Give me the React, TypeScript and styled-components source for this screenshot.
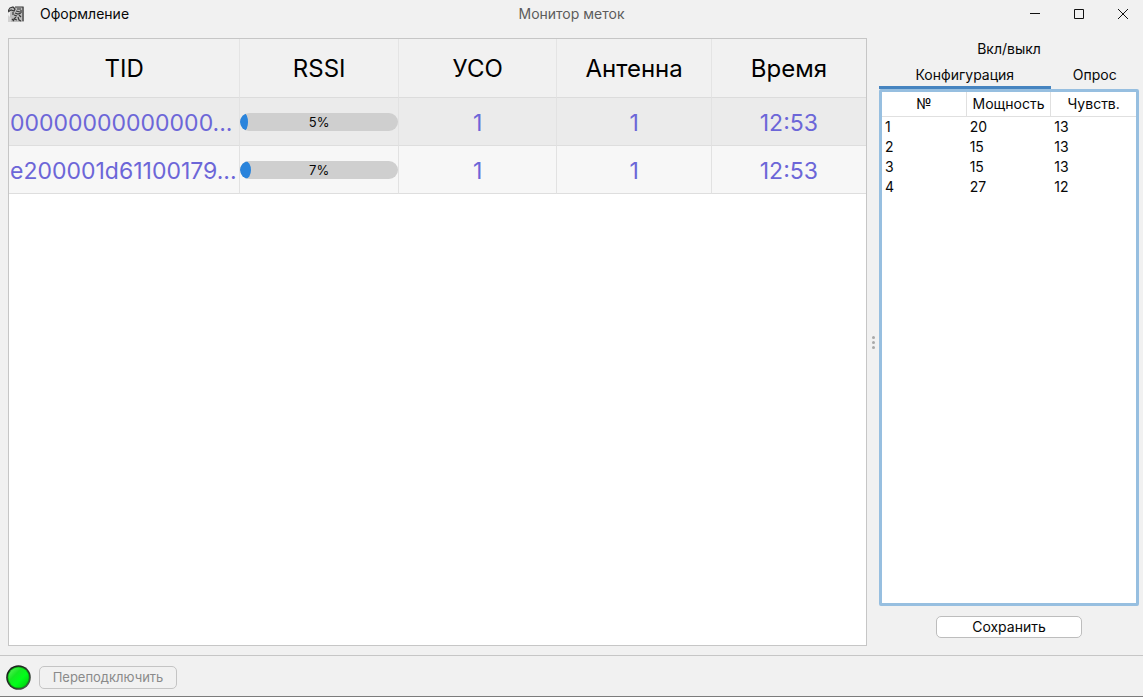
import React, { useState } from "react";
import styled, { createGlobalStyle } from "styled-components";

const Global = createGlobalStyle`
  *, *::before, *::after { box-sizing: border-box; }
  body {
    margin: 0;
    background: #f1f1f1;
    color: #080808;
    font: 14px/20px Inter, Roboto, sans-serif;
  }
  button { font: inherit; color: inherit; }
`;

const Window = styled.div`
  display: flex;
  flex-direction: column;
  min-height: 100vh;
  border-bottom: 1px solid #7c7c7c;
`;

const TitleBar = styled.header`
  display: grid;
  grid-template-columns: 1fr auto 1fr;
  align-items: center;
  height: 28px;
  padding: 0 8px;
`;

const MenuArea = styled.div`
  display: flex;
  align-items: center;
  gap: 16px;
`;

const PlainButton = styled.button`
  display: flex;
  padding: 0;
  border: 0;
  background: none;
`;

const Title = styled.h1`
  margin: 0;
  font-size: 14px;
  font-weight: 400;
  color: #5c5c5c;
`;

const WindowControls = styled.div`
  display: flex;
  justify-content: flex-end;
  gap: 20px;
`;

const ControlButton = styled(PlainButton)`
  width: 24px;
  height: 24px;
  align-items: center;
  justify-content: center;
`;

const Main = styled.main`
  flex: 1;
  display: grid;
  grid-template-columns: minmax(0, 859fr) 12px minmax(0, 260fr);
  padding: 10px 4px 9px 8px;
`;

const TagPanel = styled.section`
  background: #fff;
  border: 1px solid #c6c6c6;
`;

const TagTable = styled.table`
  width: 100%;
  table-layout: fixed;
  border-collapse: separate;
  border-spacing: 0;
  font-size: 23px;
  line-height: 28px;
  text-align: center;
`;

const TagHead = styled.th<{ $width: string }>`
  width: ${(p) => p.$width};
  height: 59px;
  padding: 2px 0 0;
  font-size: 24px;
  font-weight: 400;
  color: #000;
  background: #f1f1f1;
  border-right: 1px solid #e4e4e4;
  border-bottom: 1px solid #dcdcdc;
  &:last-child { border-right: 0; }
`;

const TagRow = styled.tr<{ $shaded: boolean }>`
  background: ${(p) => (p.$shaded ? "#ebebeb" : "#f7f7f7")};
`;

const TagCell = styled.td`
  height: 48px;
  padding: 2px 1px 0;
  color: #6c66d8;
  white-space: nowrap;
  overflow: hidden;
  border-right: 1px solid #e2e2e2;
  border-bottom: 1px solid #dedede;
  &:last-child { border-right: 0; }
`;

const TidCell = styled(TagCell)`
  text-align: left;
`;

const BarCell = styled(TagCell)`
  padding: 0;
`;

const Bar = styled.div`
  display: grid;
  height: 18px;
  border-radius: 9px;
  background: #cfcfcf;
  overflow: hidden;
`;

const BarFill = styled.div`
  grid-area: 1 / 1;
  background: #2a84dc;
  border-radius: 50%;
`;

const BarLabel = styled.span`
  grid-area: 1 / 1;
  z-index: 1;
  font-size: 13px;
  line-height: 18px;
  color: #080808;
`;

const Splitter = styled.div`
  display: flex;
  flex-direction: column;
  align-items: center;
  justify-content: center;
  gap: 2px;
`;

const Dot = styled.span`
  width: 3px;
  height: 3px;
  border-radius: 50%;
  background: #a9a9a9;
`;

const Side = styled.aside`
  display: flex;
  flex-direction: column;
`;

const Tabs = styled.div`
  display: flex;
  flex-wrap: wrap;
`;

const Tab = styled.button<{ $basis: string; $active: boolean }>`
  flex: 0 0 ${(p) => p.$basis};
  height: 26px;
  padding: 0;
  line-height: 22px;
  border: 0;
  border-bottom: 3px solid ${(p) => (p.$active ? "#4684c0" : "transparent")};
  background: none;
`;

const TabsBase = styled(Tabs)`
  padding-bottom: 0;
  margin-top: -1px;
`;

const ConfigPanel = styled.div`
  flex: 1;
  background: #fff;
  border: 3px solid #97bfe0;
  border-radius: 2px;
`;

const ConfigTable = styled.table`
  width: 100%;
  table-layout: fixed;
  border-collapse: separate;
  border-spacing: 0;

  th {
    height: 25px;
    padding: 0;
    font-weight: 400;
    border-right: 1px solid #e0e0e0;
    border-bottom: 1px solid #e0e0e0;
  }
  th:last-child { border-right: 0; }
  td { height: 20px; padding: 0 3px; }
`;

const PushButton = styled.button<{ $width: string }>`
  width: ${(p) => p.$width};
  height: 22px;
  padding: 0;
  line-height: 20px;
  border: 1px solid #bdbdbd;
  border-radius: 5px;
  background: #fff;
  &:disabled {
    height: 23px;
    font-size: 13px;
    background: #f1f1f1;
    color: #8a8a8a;
    border-color: #c4c4c4;
  }
`;

const SideActions = styled.div`
  display: flex;
  justify-content: center;
  padding: 10px 0 8px;
`;

const StatusBar = styled.footer`
  display: flex;
  align-items: center;
  gap: 8px;
  height: 41px;
  padding: 2px 6px 0;
  border-top: 1px solid #c6c6c6;
`;

const columns = [
  { name: "TID", width: "27%" },
  { name: "RSSI", width: "18.5%" },
  { name: "УСО", width: "18.5%" },
  { name: "Антенна", width: "18%" },
  { name: "Время", width: "18%" },
];

const tags = [
  { tid: "00000000000000...", rssi: 5, uso: 1, antenna: 1, time: "12:53" },
  { tid: "e200001d61100179...", rssi: 7, uso: 1, antenna: 1, time: "12:53" },
];

const antennas = [
  [1, 20, 13],
  [2, 15, 13],
  [3, 15, 13],
  [4, 27, 12],
];

const tabs = [
  { name: "Вкл/выкл", basis: "100%" },
  { name: "Конфигурация", basis: "66%" },
  { name: "Опрос", basis: "34%" },
];

function AppIcon() {
  return (
    <svg width="16" height="16" viewBox="0 0 16 16" aria-hidden="true">
      <path d="M3 1h13v15H2V8z" fill="#bcbcbc" />
      <path d="M0 16V9l3 3v4z" fill="#d2d2d2" />
      <g fill="none" stroke="#383838" strokeWidth="1.2">
        <path d="M0 5l2-3 3-1 2 2-1 2-3-1-3 2" />
        <path d="M7 1h8v14M9 3h4M8 5l4 1M13 4v3M7 7l3 1 3-1M6 9l3 1M11 9l2 2M8 11l-2 2 3 1M10 11l1 3 2 1M5 6v3M4 13l2 2" />
      </g>
    </svg>
  );
}

function StatusLamp() {
  return (
    <svg width="25" height="25" viewBox="0 0 25 25" role="img" aria-label="OK">
      <defs>
        <linearGradient id="rim" x1="0" y1="0" x2="1" y2="1">
          <stop offset="0" stopColor="#111" />
          <stop offset="0.7" stopColor="#344034" />
          <stop offset="1" stopColor="#667066" />
        </linearGradient>
        <linearGradient id="glass" x1="0" y1="0" x2="1" y2="1">
          <stop offset="0" stopColor="#62f562" />
          <stop offset="0.35" stopColor="#16e822" />
          <stop offset="0.6" stopColor="#00ff1a" />
          <stop offset="1" stopColor="#00c80c" />
        </linearGradient>
      </defs>
      <circle cx="12.5" cy="12.5" r="12.3" fill="url(#rim)" />
      <circle cx="12.5" cy="12.5" r="10.8" fill="#08a814" />
      <circle cx="12.5" cy="12.5" r="10.1" fill="url(#glass)" />
    </svg>
  );
}

export default function App() {
  const [active, setActive] = useState("Конфигурация");
  return (
    <>
      <Global />
      <Window>
        <TitleBar>
          <MenuArea>
            <AppIcon />
            <PlainButton type="button">Оформление</PlainButton>
          </MenuArea>
          <Title>Монитор меток</Title>
          <WindowControls>
            <ControlButton type="button" aria-label="Свернуть">
              <svg width="12" height="12" stroke="#111" fill="none"><path d="M1 5.5h10" /></svg>
            </ControlButton>
            <ControlButton type="button" aria-label="Развернуть">
              <svg width="12" height="12" stroke="#111" fill="none"><path d="M1.5 1.5h9v9h-9z" /></svg>
            </ControlButton>
            <ControlButton type="button" aria-label="Закрыть">
              <svg width="12" height="12" stroke="#111" fill="none"><path d="M1 1l10 10M11 1L1 11" /></svg>
            </ControlButton>
          </WindowControls>
        </TitleBar>

        <Main>
          <TagPanel>
            <TagTable>
              <thead>
                <tr>
                  {columns.map((c) => (
                    <TagHead key={c.name} scope="col" $width={c.width}>{c.name}</TagHead>
                  ))}
                </tr>
              </thead>
              <tbody>
                {tags.map((t, i) => (
                  <TagRow key={t.tid} $shaded={i % 2 === 0}>
                    <TidCell>{t.tid}</TidCell>
                    <BarCell>
                      <Bar role="progressbar" aria-label="RSSI" aria-valuenow={t.rssi} aria-valuemin={0} aria-valuemax={100}>
                        <BarFill style={{ width: `${t.rssi}%` }} />
                        <BarLabel>{t.rssi}%</BarLabel>
                      </Bar>
                    </BarCell>
                    <TagCell>{t.uso}</TagCell>
                    <TagCell>{t.antenna}</TagCell>
                    <TagCell>{t.time}</TagCell>
                  </TagRow>
                ))}
              </tbody>
            </TagTable>
          </TagPanel>

          <Splitter role="separator" aria-orientation="vertical">
            <Dot /><Dot /><Dot />
          </Splitter>

          <Side>
            <TabsBase role="tablist">
              {tabs.map((t) => (
                <Tab
                  key={t.name}
                  type="button"
                  role="tab"
                  aria-selected={t.name === active}
                  $basis={t.basis}
                  $active={t.name === active}
                  onClick={() => setActive(t.name)}
                >
                  {t.name}
                </Tab>
              ))}
            </TabsBase>
            <ConfigPanel role="tabpanel">
              <ConfigTable>
                <thead>
                  <tr>
                    <th scope="col">№</th>
                    <th scope="col">Мощность</th>
                    <th scope="col">Чувств.</th>
                  </tr>
                </thead>
                <tbody>
                  {antennas.map(([id, power, sens]) => (
                    <tr key={id}>
                      <td>{id}</td>
                      <td>{power}</td>
                      <td>{sens}</td>
                    </tr>
                  ))}
                </tbody>
              </ConfigTable>
            </ConfigPanel>
            <SideActions>
              <PushButton type="button" $width="146px">Сохранить</PushButton>
            </SideActions>
          </Side>
        </Main>

        <StatusBar>
          <StatusLamp />
          <PushButton type="button" $width="138px" disabled>Переподключить</PushButton>
        </StatusBar>
      </Window>
    </>
  );
}
